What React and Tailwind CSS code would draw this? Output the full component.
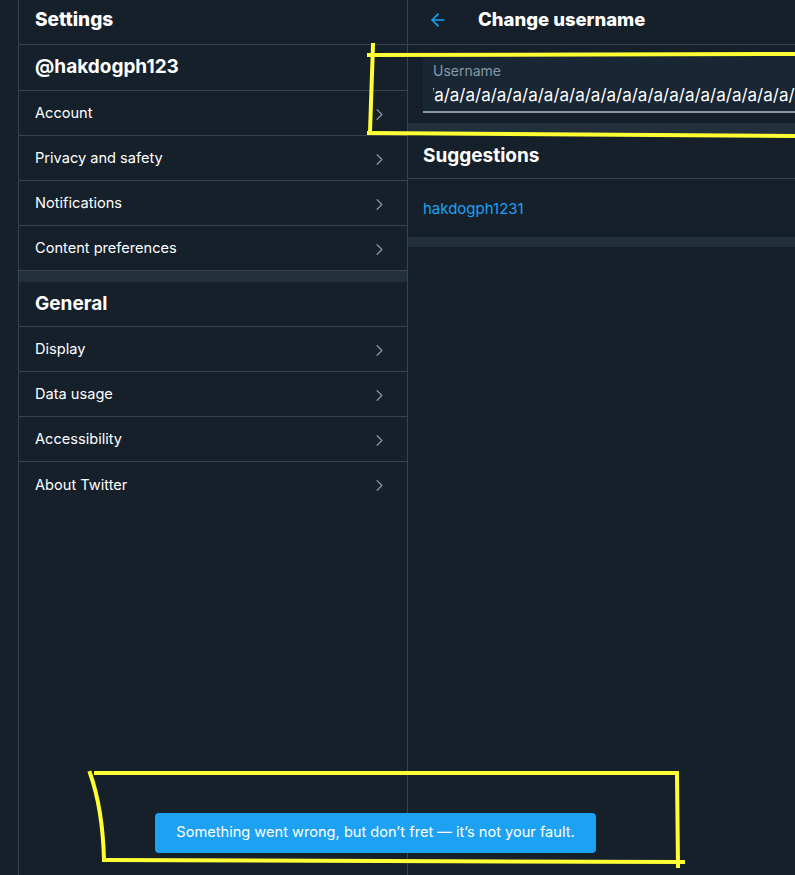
import { ChevronRight, ArrowLeft } from "lucide-react";

const accountItems = ["Account", "Privacy and safety", "Notifications", "Content preferences"];
const generalItems = ["Display", "Data usage", "Accessibility", "About Twitter"];

const font = { fontFamily: "Inter, 'Liberation Sans', sans-serif" };

function Row({ label, last }) {
  return (
    <div
      className={
        "flex h-[45px] items-center justify-between pl-4 pr-[18px] pt-[2px] " +
        (last ? "" : "border-b border-[#38444d]")
      }
    >
      <span className="whitespace-nowrap text-[14.6px] text-white">{label}</span>
      <ChevronRight className="h-[19px] w-[19px] text-[#8899a6]" strokeWidth={1.5} />
    </div>
  );
}

function Annotations() {
  // yellow marker strokes drawn over the screenshot
  return (
    <svg className="pointer-events-none absolute inset-0" width="795" height="875">
      <g fill="none" stroke="#ffff33" strokeWidth="4" strokeLinecap="square">
        <path d="M373 45 L370 132" />
        <path d="M369 55 L795 54" />
        <path d="M369 133 L795 136" />
        <path d="M90 773 C96 790 103 820 104 860" />
        <path d="M96 773 L676 773" />
        <path d="M677 773 L678 866" />
        <path d="M104 860 L683 862" />
      </g>
    </svg>
  );
}

export default function App() {
  const username = "/a".repeat(40);
  return (
    <div className="relative h-[875px] w-[795px] overflow-hidden bg-[#15202b]" style={font}>
      <div className="flex h-full">
        <div className="w-[18px] shrink-0" />
        {/* settings menu */}
        <div className="flex w-[390px] shrink-0 flex-col border-x border-[#38444d]">
          <div className="flex h-[45px] items-center border-b border-[#38444d] px-4 pb-[4px]">
            <h1 className="text-[19px] font-extrabold text-white">Settings</h1>
          </div>
          <div className="flex h-[46px] items-center border-b border-[#38444d] px-4">
            <h2 className="text-[19px] font-bold text-white">@hakdogph123</h2>
          </div>
          {accountItems.map((item) => (
            <Row key={item} label={item} />
          ))}
          <div className="h-[11px] bg-[#22303c]" />
          <div className="flex h-[45px] items-center border-b border-[#38444d] px-4">
            <h2 className="text-[19px] font-bold text-white">General</h2>
          </div>
          {generalItems.map((item, i) => (
            <Row key={item} label={item} last={i === generalItems.length - 1} />
          ))}
        </div>
        {/* change username */}
        <div className="flex min-w-0 flex-1 flex-col">
          <div className="flex h-[45px] items-center border-b border-[#38444d] pb-[4px] pl-[20px]">
            <ArrowLeft className="h-5 w-5 text-[#1da1f2]" strokeWidth={2} />
            <h1 className="ml-[30px] text-[18.5px] font-extrabold text-white">Change username</h1>
          </div>
          <div className="pb-[10px] pl-[15px] pt-[10px]">
            <div className="h-[58px] border-b-2 border-[#8899a6] bg-[#192734] pl-[10px] pt-[7px]">
              <div className="text-[14px] leading-[17px] text-[#8899a6]">Username</div>
              <div className="mt-[5px] overflow-hidden whitespace-nowrap text-[17px] leading-[22px] text-white">
                <span className="-ml-[5px]">{username}</span>
              </div>
            </div>
          </div>
          <div className="h-[11px] bg-[#22303c]" />
          <div className="flex h-[45px] items-center border-b border-[#38444d] px-[15px]">
            <h2 className="text-[19px] font-bold text-white">Suggestions</h2>
          </div>
          <div className="flex h-[58px] items-center px-[15px] pt-[2px]">
            <span className="text-[15px] text-[#1da1f2]">hakdogph1231</span>
          </div>
          <div className="h-[10px] bg-[#22303c]" />
        </div>
      </div>

      {/* toast */}
      <div className="absolute left-[155px] top-[813px] flex h-[40px] w-[441px] items-center justify-center rounded-[4px] bg-[#1da1f2]">
        <span className="text-[14.6px] text-white">
          Something went wrong, but don’t fret — it’s not your fault.
        </span>
      </div>

      <Annotations />
    </div>
  );
}
